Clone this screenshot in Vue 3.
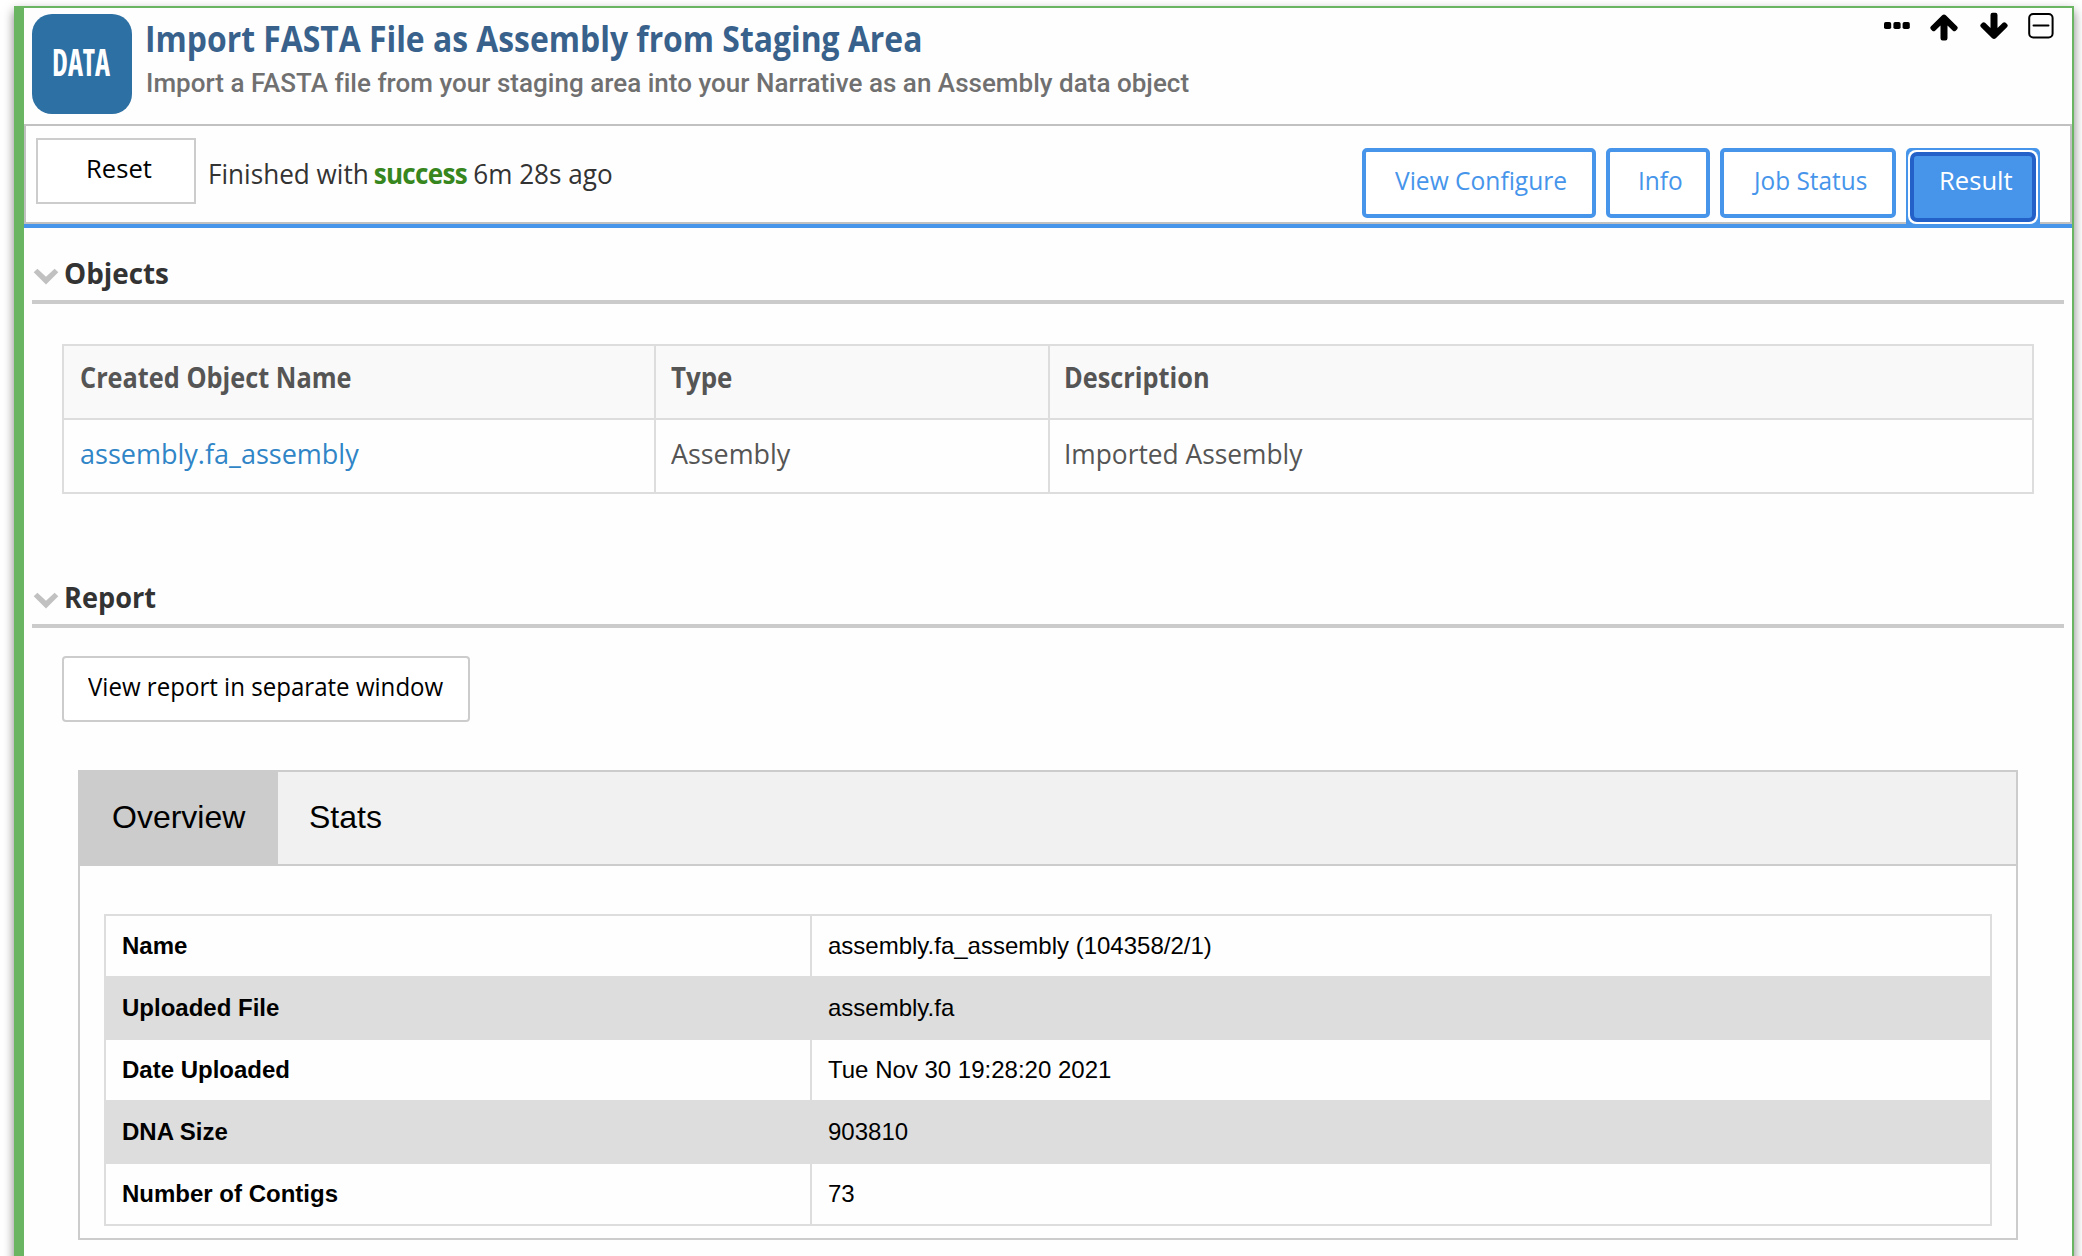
<script setup>
const tabs = [
  { label: 'View Configure', cls: 'configure' },
  { label: 'Info', cls: 'info' },
  { label: 'Job Status', cls: 'status' },
]
const rows = [
  ['Name', 'assembly.fa_assembly (104358/2/1)'],
  ['Uploaded File', 'assembly.fa'],
  ['Date Uploaded', 'Tue Nov 30 19:28:20 2021'],
  ['DNA Size', '903810'],
  ['Number of Contigs', '73'],
]
</script>

<template>
  <div class="page">
    <main class="cell">
      <header class="head">
        <div class="badge"><span>DATA</span></div>
        <div class="titles">
          <h1><span class="t">Import FASTA File as Assembly from Staging Area</span></h1>
          <p>Import a FASTA file from your staging area into your Narrative as an Assembly data object</p>
        </div>
        <div class="tools">
          <svg width="26" height="28" viewBox="0 0 26 28">
            <rect x="0" y="9" width="7.2" height="7" rx="1.8" />
            <rect x="9.4" y="9" width="7.2" height="7" rx="1.8" />
            <rect x="18.6" y="9" width="7.2" height="7" rx="1.8" />
          </svg>
          <svg width="28" height="28" viewBox="0 0 28 28">
            <path d="M12.2 1.2Q14-.4 15.8 1.2L27.2 12.5Q28.4 13.9 27.2 15.2L25.7 16.7Q24.3 17.9 22.9 16.7L17.5 11.5V24.2Q17.5 26.4 15.4 26.4H12.6Q10.5 26.4 10.5 24.2V11.5L5.1 16.7Q3.7 17.9 2.3 16.7L.8 15.2Q-.4 13.9.8 12.5Z" />
          </svg>
          <svg width="28" height="28" viewBox="0 0 28 28">
            <path d="M12.2 25.3Q14 26.9 15.8 25.3L27.2 14Q28.4 12.6 27.2 11.3L25.7 9.8Q24.3 8.6 22.9 9.8L17.5 15V2Q17.5-.2 15.4-.2H12.6Q10.5-.2 10.5 2V15L5.1 9.8Q3.7 8.6 2.3 9.8L.8 11.3Q-.4 12.6.8 14Z" />
          </svg>
          <svg width="26" height="28" viewBox="0 0 26 28">
            <rect x="1.2" y="1" width="23.4" height="23.4" rx="4" fill="none" stroke="#000" stroke-width="2" />
            <path d="M5.5 12.5H20.5" stroke="#000" stroke-width="2" stroke-linecap="round" />
          </svg>
        </div>
      </header>

      <div class="barwrap">
        <div class="bar">
          <button class="reset"><span class="t">Reset</span></button>
          <div class="state"><span class="t">Finished with <b>success</b> 6m 28s ago</span></div>
          <nav class="tabs">
            <button v-for="t in tabs" :key="t.label" class="tab" :class="t.cls"><span class="t">{{ t.label }}</span></button>
            <div class="active"><div class="ring"><button class="tab result"><span class="t">Result</span></button></div></div>
          </nav>
        </div>
      </div>

      <h2>
        <svg width="26" height="17" viewBox="0 0 26 17"><path d="M.7 4.3 4.4.7 13 8.8 21.6.7 25.3 4.3 13 16.6Z" /></svg>
        <span class="t objects">Objects</span>
      </h2>
      <div class="grid">
        <div class="th"><span class="t">Created Object Name</span></div>
        <div class="th"><span class="t type">Type</span></div>
        <div class="th desc"><span class="t">Description</span></div>
        <div class="td"><a class="t">assembly.fa_assembly</a></div>
        <div class="td"><span class="t asm">Assembly</span></div>
        <div class="td desc"><span class="t">Imported Assembly</span></div>
      </div>

      <h2 class="second">
        <svg width="26" height="17" viewBox="0 0 26 17"><path d="M.7 4.3 4.4.7 13 8.8 21.6.7 25.3 4.3 13 16.6Z" /></svg>
        <span class="t report">Report</span>
      </h2>
      <button class="view"><span class="t">View report in separate window</span></button>

      <section class="panel">
        <div class="ptabs">
          <div class="ptab on">Overview</div>
          <div class="ptab">Stats</div>
        </div>
        <div class="body">
          <div class="kv">
            <div v-for="r in rows" :key="r[0]" class="row">
              <div class="k">{{ r[0] }}</div>
              <div class="v">{{ r[1] }}</div>
            </div>
          </div>
        </div>
      </section>
    </main>
  </div>
</template>

<style>
html, body { background: #fff; }
</style>

<style scoped>
* { box-sizing: border-box; }
h1, h2, p { margin: 0; font-weight: 700; }
button { background: #fff; margin: 0; text-align: left; font: 400 26px/30px "Open Sans", sans-serif; display: block; }
svg { display: block; flex: none; }
.page { height: 1256px; padding: 6px 8px 0 14px; overflow: hidden; font: 400 28px/40px "Open Sans", sans-serif; color: #333; }
.cell { height: 1300px; border: 2px solid #6ab561; border-left-width: 10px; background: #fefefe; box-shadow: 0 5px 10px rgba(0, 0, 0, .5); }
.t { display: inline-block; white-space: nowrap; transform: scaleX(.94); transform-origin: 0 0; }

.head { height: 116px; display: flex; padding-left: 8px; }
.badge { width: 100px; height: 100px; margin-top: 6px; border-radius: 20px; background: #2d70a3; color: #fff; display: flex; justify-content: center; }
.badge span { font-size: 38px; line-height: 56px; padding: 19px 2px 0 0; font-weight: 700; font-stretch: 75%; transform: scaleX(.75); }
.titles { flex: 1; padding: 11px 0 0 13px; }
h1 { font-size: 35px; line-height: 40px; color: #38618c; }
h1 .t { transform: scaleX(.91); }
p { margin-top: 9px; padding-left: 1px; font: 500 26px/30px Roboto, sans-serif; letter-spacing: .02px; color: #707070; white-space: nowrap; }
.tools { display: flex; padding: 5px 18px 0 0; }
.tools svg + svg { margin-left: 21px; }
.tools svg:last-child { margin-left: 20px; }
.tools svg:nth-child(2) { margin-top: 1px; margin-left: 20px; }
.tools svg:nth-child(3) { margin-left: 22px; }
.tools svg { overflow: visible; }

.barwrap { border-bottom: 4px solid #4695eb; height: 104px; }
.bar { height: 100px; border: 2px solid #c1c1c1; display: flex; }
.reset { width: 160px; height: 66px; margin: 12px 0 0 10px; border: 2px solid #ccc; padding: 13px 0 20px 48px; color: #000; }
.reset .t { transform: scaleX(.985); }
.state { padding: 27px 0 0 11.5px; white-space: nowrap; }
.state .t { transform: scaleX(.933); }
.state b { font-weight: 700; color: #37861e; letter-spacing: -.8px; margin: 0 -.5px 0 -2px; }
.tabs { margin: 22px 30px 0 auto; display: flex; gap: 10px; align-items: flex-start; }
.tab { height: 70px; border: 4px solid #4695eb; border-radius: 5px; color: #4695eb; padding: 13px 0 19px 28px; }
.configure { width: 234px; padding-left: 29px; }
.configure .t { transform: scaleX(.945); }
.info { width: 104px; }
.status { width: 176px; padding-left: 30px; }
.status .t { transform: scaleX(.937); }
.active { width: 134px; height: 76px; background: #4695eb; border-radius: 5px 5px 0 0; padding: 2px; position: relative; }
.ring { height: 74px; background: #fff; border-radius: 8px; padding: 2px; }
.result { width: 126px; border-color: #2361c8; background: #4695eb; color: #fff; padding: 9px 0 23px 25px; border-radius: 7px; }
.result .t { transform: scaleX(.985); }

h2 { margin: 24px 8px 0; height: 52px; border-bottom: 4px solid #cbcbcb; display: flex; font-size: 29px; line-height: 42px; }
h2 svg { margin: 16px 5px 0 1px; fill: #c1c1c1; }
.objects { transform: scaleX(.96); }
.report { transform: scaleX(.936); }
.second { margin-top: 82px; }

.grid { display: grid; grid-template-columns: 592px 394px 984px; margin: 40px 0 0 38px; width: 1972px; border: solid #ddd; border-width: 2px 0 0 2px; color: #555; }
.th, .td { height: 74px; border: solid #ddd; border-width: 0 2px 2px 0; padding: 11px 0 0 15px; }
.th { background: #f9f9f9; font-weight: 700; }
.th:first-child { padding-left: 16px; }
.th .t { transform: scaleX(.904); }
.td { padding-top: 13px; }
.th.desc, .td.desc { padding-left: 14px; }
.th .type { transform: scaleX(.925); }
.asm { transform: scaleX(.96); }
a.t { color: #3085c7; transform: scaleX(.965); margin-left: 1px; }

.view { margin: 28px 0 0 38px; width: 408px; height: 66px; border: 2px solid #ccc; border-radius: 4px; padding: 13px 0 19px 24px; color: #000; }
.view .t { transform: scaleX(.926); }

.panel { margin: 48px 0 0 54px; width: 1940px; height: 470px; border: 2px solid #ccc; font-family: "Liberation Sans", Arial, sans-serif; color: #000; }
.ptabs { height: 94px; background: #f1f1f1; border-bottom: 2px solid #ccc; display: flex; font-size: 32px; line-height: 36px; }
.ptab { padding: 27px 31px 29px; }
.on { background: #ccc; width: 198px; padding-left: 32px; }
.body { padding: 48px 24px 0; }
.kv { border: 2px solid #ddd; font-size: 24px; line-height: 28px; }
.row { display: flex; height: 60px; }
.row:nth-child(even) { background: #ddd; height: 64px; }
.k { width: 706px; border-right: 2px solid #ddd; padding: 16px 0 0 16px; font-weight: 700; }
.v { padding: 16px 0 0 16px; }
.row:nth-child(even) > div { padding-top: 18px; }
</style>
